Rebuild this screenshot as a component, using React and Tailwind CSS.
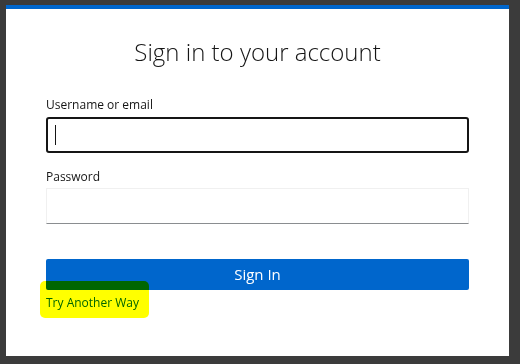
export default function App() {
    return (
        <div className="h-[364px] w-[520px] overflow-hidden bg-[#3b3b3b] pt-[5px] pl-[6px] font-['Open_Sans',sans-serif]">
            <div className="flex h-[351px] w-[503px] flex-col border-t-4 border-[#0066cc] bg-white px-[40px]">
                <h1 className="mt-[27px] text-center text-[24px] font-light leading-[32px] text-[#151515]">
                    Sign in to your account
                </h1>

                <label className="mt-[28px] text-[12px] leading-[18px] text-[#151515]">Username or email</label>
                <div className="mt-[3px] flex h-[36px] w-[423px] items-center rounded-[3px] border-2 border-[#151515] px-[7px]">
                    <span className="h-[20px] w-px bg-[#151515]"></span>
                </div>

                <label className="mt-[15px] text-[12px] leading-[18px] text-[#151515]">Password</label>
                <div className="mt-[2px] h-[36px] w-[423px] border border-[#f0f0f0] border-b-[#8a8d90]"></div>

                <button className="mt-[35px] h-[31px] w-[423px] rounded-[2px] bg-[#0066cc] text-[15px] text-white">
                    Sign In
                </button>

                <div className="relative mt-[-1px] w-[423px]">
                    <span className="text-[12px] leading-[20px] text-[#0066cc]">Try Another Way</span>
                    <div className="absolute top-[-8px] left-[-6px] h-[37px] w-[109px] rounded-[5px] bg-[#ffff00] mix-blend-multiply"></div>
                </div>
            </div>
        </div>
    );
}
